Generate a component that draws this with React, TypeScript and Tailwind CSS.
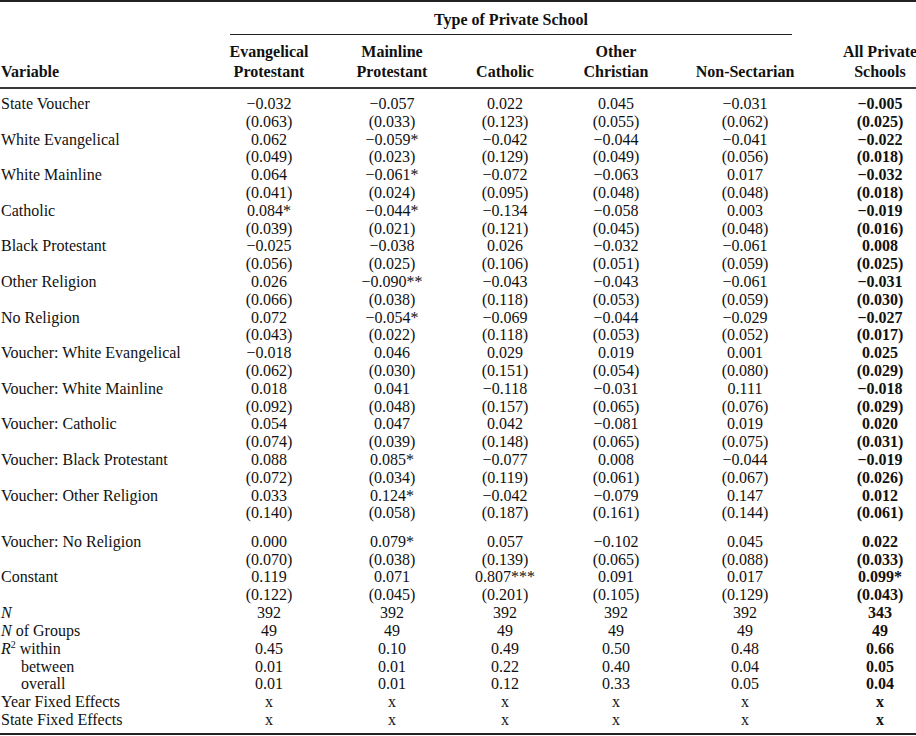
import type { ReactNode } from 'react';

const grid = 'grid grid-cols-[230px_78px_168px_58px_164px_94px_124px]';

type Row = {
    label: ReactNode
    coef: string[]
    se?: string[]
    gap?: boolean
}

const rows: Row[] = [
    { label: 'State Voucher', coef: ['−0.032', '−0.057', '0.022', '0.045', '−0.031', '−0.005'], se: ['(0.063)', '(0.033)', '(0.123)', '(0.055)', '(0.062)', '(0.025)'] },
    { label: 'White Evangelical', coef: ['0.062', '−0.059*', '−0.042', '−0.044', '−0.041', '−0.022'], se: ['(0.049)', '(0.023)', '(0.129)', '(0.049)', '(0.056)', '(0.018)'] },
    { label: 'White Mainline', coef: ['0.064', '−0.061*', '−0.072', '−0.063', '0.017', '−0.032'], se: ['(0.041)', '(0.024)', '(0.095)', '(0.048)', '(0.048)', '(0.018)'] },
    { label: 'Catholic', coef: ['0.084*', '−0.044*', '−0.134', '−0.058', '0.003', '−0.019'], se: ['(0.039)', '(0.021)', '(0.121)', '(0.045)', '(0.048)', '(0.016)'] },
    { label: 'Black Protestant', coef: ['−0.025', '−0.038', '0.026', '−0.032', '−0.061', '0.008'], se: ['(0.056)', '(0.025)', '(0.106)', '(0.051)', '(0.059)', '(0.025)'] },
    { label: 'Other Religion', coef: ['0.026', '−0.090**', '−0.043', '−0.043', '−0.061', '−0.031'], se: ['(0.066)', '(0.038)', '(0.118)', '(0.053)', '(0.059)', '(0.030)'] },
    { label: 'No Religion', coef: ['0.072', '−0.054*', '−0.069', '−0.044', '−0.029', '−0.027'], se: ['(0.043)', '(0.022)', '(0.118)', '(0.053)', '(0.052)', '(0.017)'] },
    { label: 'Voucher: White Evangelical', coef: ['−0.018', '0.046', '0.029', '0.019', '0.001', '0.025'], se: ['(0.062)', '(0.030)', '(0.151)', '(0.054)', '(0.080)', '(0.029)'] },
    { label: 'Voucher: White Mainline', coef: ['0.018', '0.041', '−0.118', '−0.031', '0.111', '−0.018'], se: ['(0.092)', '(0.048)', '(0.157)', '(0.065)', '(0.076)', '(0.029)'] },
    { label: 'Voucher: Catholic', coef: ['0.054', '0.047', '0.042', '−0.081', '0.019', '0.020'], se: ['(0.074)', '(0.039)', '(0.148)', '(0.065)', '(0.075)', '(0.031)'] },
    { label: 'Voucher: Black Protestant', coef: ['0.088', '0.085*', '−0.077', '0.008', '−0.044', '−0.019'], se: ['(0.072)', '(0.034)', '(0.119)', '(0.061)', '(0.067)', '(0.026)'] },
    { label: 'Voucher: Other Religion', coef: ['0.033', '0.124*', '−0.042', '−0.079', '0.147', '0.012'], se: ['(0.140)', '(0.058)', '(0.187)', '(0.161)', '(0.144)', '(0.061)'] },
    { label: 'Voucher: No Religion', gap: true, coef: ['0.000', '0.079*', '0.057', '−0.102', '0.045', '0.022'], se: ['(0.070)', '(0.038)', '(0.139)', '(0.065)', '(0.088)', '(0.033)'] },
    { label: 'Constant', coef: ['0.119', '0.071', '0.807***', '0.091', '0.017', '0.099*'], se: ['(0.122)', '(0.045)', '(0.201)', '(0.105)', '(0.129)', '(0.043)'] },
    { label: <i>N</i>, coef: ['392', '392', '392', '392', '392', '343'] },
    { label: <><i>N</i> of Groups</>, coef: ['49', '49', '49', '49', '49', '49'] },
    { label: <><i>R</i><span className="align-super text-[10px] leading-none">2</span> within</>, coef: ['0.45', '0.10', '0.49', '0.50', '0.48', '0.66'] },
    { label: <span className="pl-[20px]">between</span>, coef: ['0.01', '0.01', '0.22', '0.40', '0.04', '0.05'] },
    { label: <span className="pl-[20px]">overall</span>, coef: ['0.01', '0.01', '0.12', '0.33', '0.05', '0.04'] },
    { label: 'Year Fixed Effects', coef: ['x', 'x', 'x', 'x', 'x', 'x'] },
    { label: 'State Fixed Effects', coef: ['x', 'x', 'x', 'x', 'x', 'x'] },
]

function Cell({ children, idx }: { children: ReactNode, idx: number }) {
    return (
        <div className={idx === 5 ? 'flex justify-center whitespace-nowrap pl-[52px] font-bold' : 'flex justify-center whitespace-nowrap'}>
            {children}
        </div>
    )
}

function Line({ label, values }: { label: ReactNode, values: string[] }) {
    return (
        <div className={`${grid} leading-[17.8px]`}>
            <div className="whitespace-nowrap pl-px">{label}</div>
            {values.map((v, i) => <Cell key={i} idx={i}>{v}</Cell>)}
        </div>
    )
}

export default function App() {
    return (
        <div className="w-[916px] h-[736px] bg-white text-[#111] text-[16px] font-['Liberation_Serif',serif] overflow-hidden">
            <div className="border-t-2 border-[#222]">
                <div className={grid}>
                    <div className="col-start-2 col-span-5 border-b border-[#222] pt-[8px] pb-[4px] text-center font-bold leading-[20px]">
                        Type of Private School
                    </div>
                </div>
                <div className={`${grid} items-end border-b-2 border-[#3a3a3a] pt-[7px] pb-[5px] font-bold leading-[20px]`}>
                    <div className="pl-px">Variable</div>
                    <Cell idx={0}><div className="text-center">Evangelical<br />Protestant</div></Cell>
                    <Cell idx={1}><div className="text-center">Mainline<br />Protestant</div></Cell>
                    <Cell idx={2}>Catholic</Cell>
                    <Cell idx={3}><div className="text-center">Other<br />Christian</div></Cell>
                    <Cell idx={4}>Non-Sectarian</Cell>
                    <Cell idx={5}><div className="text-center">All Private<br />Schools</div></Cell>
                </div>
                <div className="border-b-2 border-[#222] pt-[6px] pb-[4px]">
                    {rows.map((r, i) => (
                        <div key={i} className={r.gap ? 'mt-[10.6px]' : ''}>
                            <Line label={r.label} values={r.coef} />
                            {r.se && <Line label="" values={r.se} />}
                        </div>
                    ))}
                </div>
            </div>
        </div>
    )
}
